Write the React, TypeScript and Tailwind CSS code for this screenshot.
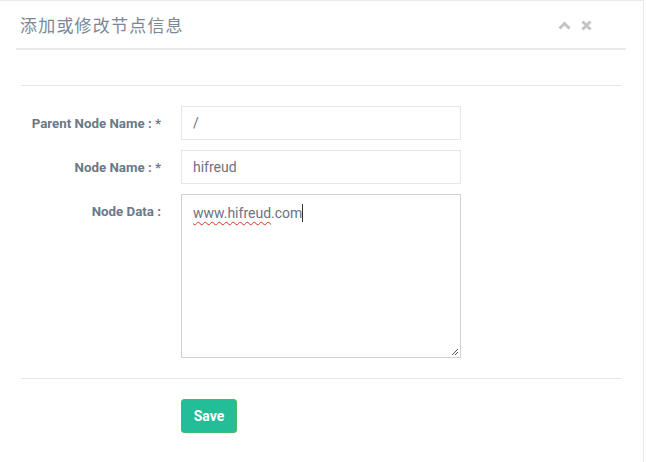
import React from "react";

const labelCls =
  "w-[140px] shrink-0 text-right pt-[10px] text-[13.3px] font-bold text-[#6b7888] leading-[16px]";
const inputCls =
  "w-[280px] h-[34px] border border-[#e5e6e7] px-[11px] text-[14px] text-[#6b7380] outline-none bg-white";

export default function App() {
  return (
    <div className="w-[646px] h-[462px] bg-white" style={{ fontFamily: "Roboto, 'Liberation Sans', sans-serif" }}>
      <div className="w-[644px] h-full border-t border-r border-[#e7eaec]">
        {/* header */}
        <div className="ml-[16px] w-[610px] h-[49px] border-b-2 border-[#e7eaec] flex items-center justify-between pl-[4px] pr-[34px]">
          <h5
            className="text-[17px] text-[#7a8797] font-normal tracking-[1.2px] pt-[1px]"
            style={{ fontFamily: "'Noto Sans CJK SC', sans-serif" }}
          >
            添加或修改节点信息
          </h5>
          <div className="flex items-center gap-[10px] text-[#c4c4c4] pt-[1px]">
            <svg width="13" height="9" viewBox="0 0 13 9">
              <path d="M1.5 7.5 L6.5 2.5 L11.5 7.5" fill="none" stroke="currentColor" strokeWidth="3" />
            </svg>
            <svg width="11" height="11" viewBox="0 0 11 11">
              <path d="M1.5 1.5 L9.5 9.5 M9.5 1.5 L1.5 9.5" fill="none" stroke="currentColor" strokeWidth="3" />
            </svg>
          </div>
        </div>

        {/* body */}
        <div className="ml-[21px] w-[600px]">
          <div className="h-[36px] border-b border-[#e5e5e5]" />
          <div className="pt-[20px] flex flex-col gap-[10px]">
            <div className="flex gap-[20px]">
              <label className={labelCls}>Parent Node Name : *</label>
              <input className={inputCls} defaultValue="/" />
            </div>
            <div className="flex gap-[20px]">
              <label className={labelCls}>Node Name : *</label>
              <input className={inputCls} defaultValue="hifreud" />
            </div>
            <div className="flex gap-[20px]">
              <label className={labelCls}>Node Data :</label>
              <div className="relative w-[280px] h-[164px] border border-[#cdd0d4] px-[11px] pt-[8px] text-[14px] text-[#6b7380] leading-[20px]">
                <span className="underline decoration-wavy decoration-[#e0301e] decoration-1 underline-offset-[3px]">www.hifreud</span>
                <span>.com</span>
                <span className="inline-block w-px h-[18px] bg-[#333] align-[-4px]" />
                <svg className="absolute right-[1px] bottom-[1px]" width="9" height="9" viewBox="0 0 9 9">
                  <path d="M8 2 L2 8 M8 5 L5 8" stroke="#555" strokeWidth="1" />
                </svg>
              </div>
            </div>
          </div>
          <div className="mt-[20px] border-b border-[#e5e5e5]" />
          <div className="pt-[20px] pl-[160px]">
            <button className="w-[56px] h-[34px] rounded-[3px] bg-[#23bd98] border border-[#45b86a] text-white text-[14px] font-bold">
              Save
            </button>
          </div>
        </div>
      </div>
    </div>
  );
}
